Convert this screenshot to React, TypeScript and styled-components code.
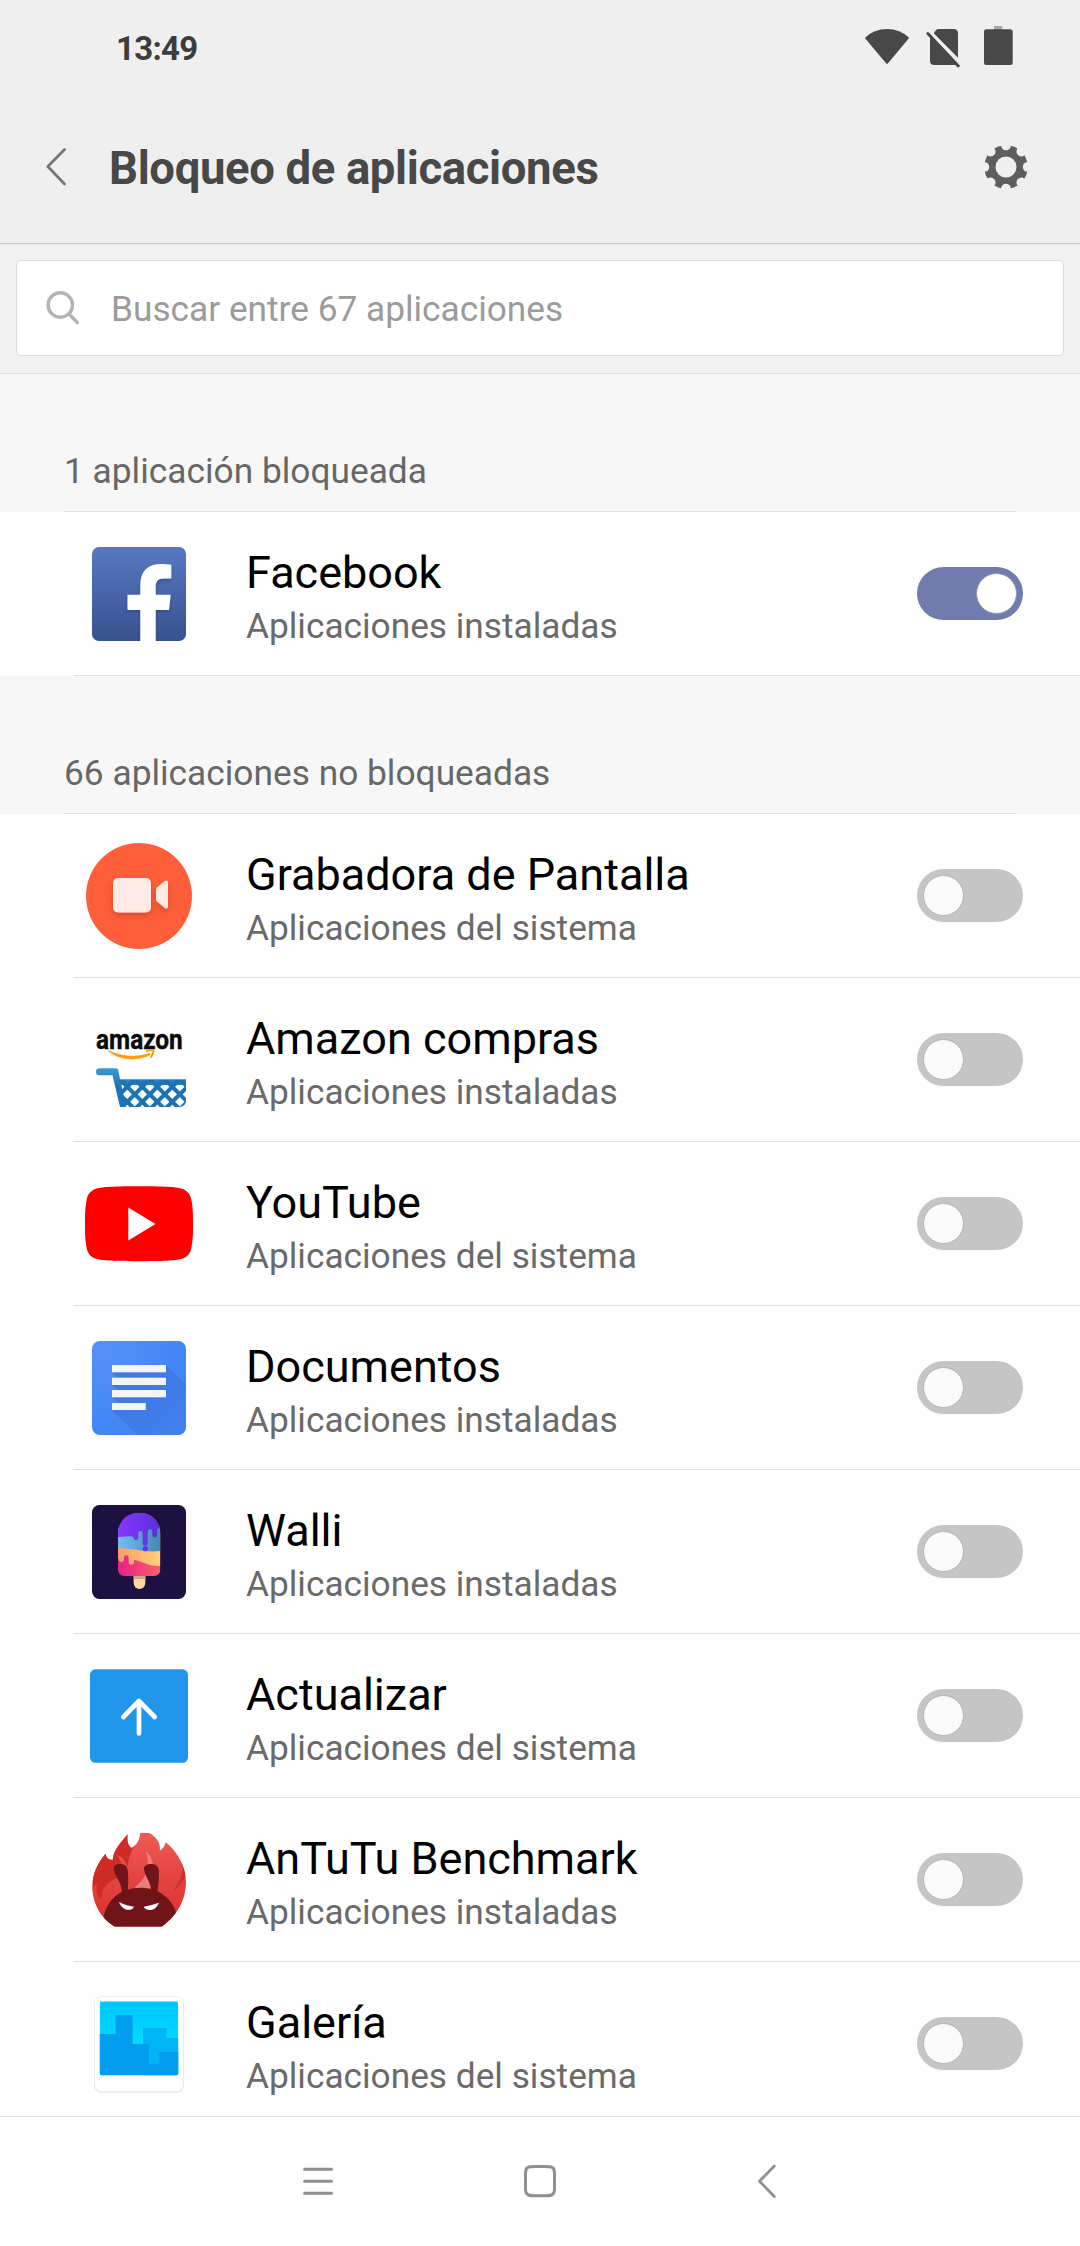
import React from 'react';
import styled, { createGlobalStyle } from 'styled-components';

const GlobalStyle = createGlobalStyle`
  * { box-sizing: border-box; }
  body { margin: 0; background: #fefefe; }
  svg { display: block; flex: none; }
`;

const Screen = styled.div`
  display: flex;
  flex-direction: column;
  width: 1080px;
  height: 2246px;
  overflow: hidden;
  background: #fefefe;
  font-family: Roboto, 'Noto Sans', sans-serif;
`;

const StatusBar = styled.div`
  flex: none;
  display: flex;
  align-items: center;
  justify-content: space-between;
  height: 98px;
  padding: 0 57px 0 116px;
  background: #efefef;
`;

const Clock = styled.span`
  font-size: 33px;
  font-weight: 700;
  line-height: 40px;
  letter-spacing: -0.7px;
  color: #3c3c3c;
`;

const StatusIcons = styled.div`
  display: flex;
  gap: 8px;
`;

const TitleBar = styled.header`
  flex: none;
  display: flex;
  align-items: center;
  height: 146px;
  padding: 0 49px 5px 31px;
  background: #efefef;
  border-bottom: 1px solid #c8c8c8;
`;

const Title = styled.h1`
  flex: 1;
  margin: 0 0 0 30px;
  padding-top: 1px;
  font-size: 45.5px;
  font-weight: 700;
  line-height: 56px;
  letter-spacing: -0.37px;
  color: #484848;
`;

const IconButton = styled.button`
  padding: 0;
  border: 0;
  background: none;
`;

const SearchBand = styled.div`
  flex: none;
  height: 130px;
  padding: 16px 16px 0;
  background: #f2f2f2;
  border-bottom: 1px solid #dfdfdf;
`;

const SearchBox = styled.div`
  display: flex;
  align-items: center;
  gap: 23px;
  height: 96px;
  padding-left: 23px;
  background: #fff;
  border: 1px solid #dadada;
  border-radius: 4px;
`;

const Placeholder = styled.span`
  padding-top: 2px;
  font-size: 35.25px;
  line-height: 42px;
  color: #9b9b9b;
`;

const List = styled.main`
  flex: 1;
  min-height: 0;
  overflow: hidden;
`;

const SectionHeader = styled.div`
  height: 138px;
  padding: 0 64px;
  background: #f7f7f7;
`;

const SectionLabel = styled.h2`
  display: flex;
  align-items: flex-end;
  height: 138px;
  margin: 0;
  padding-bottom: 20px;
  border-bottom: 1px solid #dfdfdf;
  font-size: 35.3px;
  font-weight: 400;
  line-height: 40px;
  color: #676767;
`;

const Row = styled.div`
  display: flex;
  align-items: center;
  height: 164px;
  margin-left: 73px;
  padding: 0 57px 0 11px;
  border-bottom: 1px solid #dfdfdf;
`;

const Texts = styled.div`
  flex: 1;
  margin-left: 52px;
  padding-top: 9px;
`;

const AppName = styled.div`
  font-size: 45px;
  line-height: 54px;
  color: #000;
`;

const AppKind = styled.div`
  padding-top: 1px;
  font-size: 35.25px;
  line-height: 50px;
  color: #6a6a6a;
`;

const Toggle = styled.span<{ $on?: boolean }>`
  display: flex;
  align-items: center;
  justify-content: ${(p) => (p.$on ? 'flex-end' : 'flex-start')};
  width: 106px;
  height: 53px;
  padding: 0 6px;
  border-radius: 27px;
  background: ${(p) => (p.$on ? '#6f7cad' : '#c5c5c5')};
`;

const Knob = styled.span<{ $on?: boolean }>`
  width: 41px;
  height: 41px;
  border-radius: 50%;
  border: 1px solid ${(p) => (p.$on ? '#8f96ad' : '#b4b4b4')};
  background: ${(p) => (p.$on ? '#fff' : '#fafafa')};
`;

const NavBar = styled.nav`
  flex: none;
  display: grid;
  grid-template-columns: repeat(3, 222px);
  justify-content: center;
  justify-items: center;
  align-items: center;
  height: 130px;
  border-top: 1px solid #e2e2e2;
  background: #fefefe;
`;

const FacebookIcon = () => (
  <svg width="110" height="110" viewBox="0 0 110 110">
    <defs>
      <linearGradient id="fb" x1="0" y1="0" x2="0" y2="1">
        <stop offset="0" stopColor="#5878c2" />
        <stop offset="1" stopColor="#38528f" />
      </linearGradient>
      <filter id="fbs" x="-20%" y="-20%" width="140%" height="140%">
        <feDropShadow dx="0" dy="2" stdDeviation="1.5" floodColor="#1d3468" floodOpacity=".5" />
      </filter>
      <clipPath id="fbc"><rect x="8" y="8" width="94" height="94" rx="7" /></clipPath>
    </defs>
    <rect x="8" y="8" width="94" height="94" rx="7" fill="url(#fb)" />
    <g clipPath="url(#fbc)">
      <path filter="url(#fbs)" fill="#fff" d="M56.3 104V71H43.5V55.7h12.8V46C56.3 32 64 25 77 25c4 0 8 .3 10.3.7v13.7H80c-6.500 0-8.300 3.200-8.300 8.200v8.100h15L85 71H71.700V104Z" />
    </g>
  </svg>
);

const RecorderIcon = () => (
  <svg width="110" height="110" viewBox="0 0 110 110">
    <defs>
      <filter id="recs" x="-30%" y="-30%" width="160%" height="170%">
        <feDropShadow dx="0" dy="3" stdDeviation="3" floodColor="#b8300c" floodOpacity=".5" />
      </filter>
    </defs>
    <circle cx="55" cy="55" r="53" fill="#fe5f3a" />
    <g fill="#ffeae5" filter="url(#recs)">
      <rect x="29" y="37" width="38" height="34.500" rx="5" />
      <path d="M72 49q0-1.500 1-2.500l7.800-6.500q3.200-1.500 3.200 1.500v24q0 3-3.200 1.500L73 60.500q-1-1-1-2.500Z" />
    </g>
  </svg>
);

const AmazonIcon = () => (
  <svg width="110" height="110" viewBox="0 0 110 110">
    <defs>
      <clipPath id="basket"><path d="M35 75h67v20q0 7-7 7H41Z" /></clipPath>
      <linearGradient id="cart" x1="0" y1="0" x2="0" y2="1">
        <stop offset="0" stopColor="#3b9ad6" />
        <stop offset=".5" stopColor="#1b73b4" />
      </linearGradient>
    </defs>
    <text x="0" y="0" transform="translate(12 44.300) scale(.87 1)" fontFamily="Roboto, sans-serif" fontWeight="700" fontSize="28" fill="#0a0a0a" stroke="#0a0a0a" strokeWidth=".4">amazon</text>
    <path d="M24.300 45.600C34 54.500 52 57 66.300 49.600L65.500 48.300C52 53.500 36 51.500 24.300 45.600Z" fill="#ff9a0c" stroke="#ff9a0c" strokeWidth=".8" strokeLinejoin="round" />
    <path d="M62 46.200q4.500-1.800 7.400-.7.300 3-2.600 7" fill="none" stroke="#ff9a0c" strokeWidth="1.900" strokeLinejoin="round" />
    <path d="M15.500 63.300H32q1.800 0 2.300 1.800L36 74.300H102V80H37.300L42 102H36L28.500 70.300H15.500a3.500 3.500 0 0 1 0-7Z" fill="url(#cart)" />
    <g clipPath="url(#basket)" stroke="#1b73b4" strokeWidth="4">
      {[-3, -2, -1, 0, 1, 2, 3, 4].map((k) => (
        <React.Fragment key={k}>
          <path d={`M${20.8 + 15 * k} 59.300l60 60`} />
          <path d={`M${80.8 + 15 * k} 59.300l-60 60`} />
        </React.Fragment>
      ))}
    </g>
  </svg>
);

const YouTubeIcon = () => (
  <svg width="110" height="110" viewBox="0 0 110 110">
    <path fill="#f00" d="M55 17.300C85 17.300 93 18.300 98 19.800C104 21.800 106.500 26 107.500 31.500C109 40 109 45 109 54.700C109 65 109 70 107.500 78.300C106.500 84 104 87.800 98 89.800C93 91.300 85 92.200 55 92.200C25 92.200 17 91.300 12 89.800C6 87.800 3.500 84 2.500 78.300C1 70 1 65 1 54.700C1 45 1 40 2.500 31.500C3.500 26 6 21.800 12 19.800C17 18.300 25 17.300 55 17.300Z" />
    <path fill="#fff" d="M44.300 38.500L71.500 55L44.300 71.500Z" />
  </svg>
);

const DocsIcon = () => (
  <svg width="110" height="110" viewBox="0 0 110 110">
    <defs>
      <radialGradient id="doc" cx=".12" cy=".12" r="1">
        <stop offset="0" stopColor="#5592f8" />
        <stop offset=".8" stopColor="#4285f4" />
      </radialGradient>
      <linearGradient id="docs" x1="0" y1="0" x2="1" y2="1">
        <stop offset="0" stopColor="#3a6bd0" stopOpacity=".7" />
        <stop offset="1" stopColor="#4080ee" stopOpacity=".7" />
      </linearGradient>
      <clipPath id="docc"><rect x="8" y="8" width="94" height="94" rx="8" /></clipPath>
    </defs>
    <g clipPath="url(#docc)">
      <rect x="8" y="8" width="94" height="94" fill="url(#doc)" />
      <path fill="url(#docs)" d="M82 32L102 52V102H53L28 77H61.700V70H34.500L28 64H82V57H33.500L28 52H82V44.700H33.500L28 39.500H82Z" />
    </g>
    <g fill="#f4f4f4">
      <rect x="28" y="32" width="54" height="7.300" />
      <rect x="28" y="44.700" width="54" height="7.300" />
      <rect x="28" y="57" width="54" height="7.300" />
      <rect x="28" y="70" width="33.700" height="7" />
    </g>
  </svg>
);

const WalliIcon = () => (
  <svg width="110" height="110" viewBox="0 0 110 110">
    <defs>
      <linearGradient id="wp"><stop offset="0" stopColor="#8a37ff" /><stop offset="1" stopColor="#5530d8" /></linearGradient>
      <linearGradient id="wb"><stop offset="0" stopColor="#76bdf5" /><stop offset="1" stopColor="#4489ae" /></linearGradient>
      <linearGradient id="wo"><stop offset="0" stopColor="#ff9b6b" /><stop offset="1" stopColor="#ffd27a" /></linearGradient>
      <linearGradient id="wr"><stop offset="0" stopColor="#e6208b" /><stop offset="1" stopColor="#ff6066" /></linearGradient>
      <clipPath id="pop"><path d="M174 162C174 124 202 98 238 98S301 124 301 162V268Q301 288 281 288H194Q174 288 174 268Z" /></clipPath>
    </defs>
    <rect x="8" y="8" width="94" height="94" rx="7.500" fill="#1c1140" />
    <g transform="translate(-24 -17) scale(.33333)">
      <path d="M221 285H256V309a17.500 18 0 0 1-35 0Z" fill="#fdd6a0" />
      <path d="M221 286H256V297H221Z" fill="#cda685" />
      <g clipPath="url(#pop)">
        <rect x="172" y="95" width="132" height="195" fill="url(#wr)" />
        <path d="M172 150H304V258C262 260 246 242 222 240V246a8 8 0 0 1-16 0V233a7 7 0 0 0-14 0V238a8 8 0 0 1-16 0L172 230Z" fill="url(#wo)" />
        <path d="M172 140H304V212C262 220 225 205 172 204Z" fill="url(#wb)" />
        <path d="M172 95H304V148Q294 140 291 151V166a7 7 0 0 1-14 0V155a7 7 0 0 0-14 0V190a7.500 7 0 0 1-15 0V160a6.500 7 0 0 0-13 0V173a7.500 7 0 0 1-15 0Q220 165 172 172Z" fill="url(#wp)" />
        <circle cx="256" cy="206" r="8" fill="#6534e8" />
      </g>
    </g>
  </svg>
);

const UpdateIcon = () => (
  <svg width="110" height="110" viewBox="0 0 110 110">
    <rect x="6" y="8.300" width="98" height="93.500" rx="5.500" fill="#2096ea" />
    <path d="M55 72.500V40M39.300 56L55 40L70.700 56" fill="none" stroke="#fff" strokeWidth="4.700" strokeLinecap="round" strokeLinejoin="round" />
  </svg>
);

const AntutuIcon = () => (
  <svg width="110" height="110" viewBox="0 0 110 110">
    <defs>
      <linearGradient id="an" x1="0" y1="0" x2="0" y2="1">
        <stop offset="0" stopColor="#ef5a55" />
        <stop offset="1" stopColor="#d82e2a" />
      </linearGradient>
      <clipPath id="anc">
        <path d="M97 230C97 190 115 155 137 131Q138 149 158 150C160 120 185 95 203 73C200 92 204 108 215 114C230 105 240 90 240 69H268C288 80 304 100 299 123Q313 114 317 97C350 122 378 170 378 215C378 260 360 310 305 350H165C115 320 97 270 97 230Z" />
      </clipPath>
    </defs>
    <g transform="translate(-24 -15) scale(.33333)">
      <g clipPath="url(#anc)">
        <rect x="95" y="65" width="290" height="290" fill="url(#an)" />
        <path d="M90 60H240C240 90 205 120 203 172C196 150 185 138 168 135C180 145 184 155 184 168V200C150 210 120 230 124 270C112 258 104 240 113 218C102 225 98 240 97 255H90Z" fill="#ce2b24" />
        <path d="M357 142C385 190 352 215 339 246C350 235 375 215 378 190L384 150Z" fill="#cd2f2a" />
        <path d="M257 124C286 145 286 200 270 238H220C240 215 258 205 262 170C266 150 260 135 257 124Z" fill="#ef7b76" />
        <path d="M128 330C140 265 185 233 240 233S340 265 352 320L320 360H150Z" fill="#711419" />
        <path d="M186 252C187 215 162 198 161 175C163 158 198 158 202 176C207 203 204 225 203 250Z" fill="#711419" />
        <path d="M275 250C273 212 252 198 252 174C255 158 290 158 295 175C300 205 294 225 292 252Z" fill="#711419" />
      </g>
      <path d="M177 276C195 285 208 288 222 290C218 303 188 306 177 276Z" fill="#fff" />
      <path d="M297 278C280 284 265 288 251 290C258 304 286 306 297 278Z" fill="#fff" />
    </g>
  </svg>
);

const GalleryIcon = () => (
  <svg width="110" height="110" viewBox="0 0 110 110">
    <defs>
      <linearGradient id="sky" x1="0" y1="0" x2="0" y2="1">
        <stop offset="0" stopColor="#00c6ff" />
        <stop offset=".6" stopColor="#00dcff" />
      </linearGradient>
      <clipPath id="galc"><rect x="119" y="94" width="236" height="222" rx="7" /></clipPath>
    </defs>
    <g transform="translate(-24 -19) scale(.33333)">
      <rect x="102" y="80" width="270" height="288" rx="22" fill="#e4e4e4" />
      <rect x="103.500" y="79" width="267" height="286" rx="22" fill="#fff" stroke="#e9e9e9" strokeWidth="2" />
      <g clipPath="url(#galc)">
        <rect x="119" y="94" width="236" height="222" fill="url(#sky)" />
        <path d="M249 174H319V204H356V318H249Z" fill="#00b4f6" />
        <path d="M118 192H167V135H218V222H267V281H298V246H356V318H118Z" fill="#029def" />
      </g>
    </g>
  </svg>
);

const WifiIcon = () => (
  <svg width="48" height="50" viewBox="0 0 48 50">
    <path fill="#484848" d="M2.300 13.500Q11 5 24 5T45.700 13.500Q46 14 45.500 14.700L25 39.300Q24 40.300 23 39.300L2.500 14.700Q2 14 2.300 13.500Z" />
  </svg>
);

const NoSimIcon = () => (
  <svg width="48" height="50" viewBox="0 0 48 50">
    <path fill="#484848" d="M15.200 8.400L17.200 6.100Q18.200 5 19.800 5H34.500Q39 5 39 9.500V33.800L15.200 9.800Q14.500 9.100 15.200 8.400Z" />
    <path fill="#484848" d="M11 13.200L37.800 40Q36.500 41 34.500 41H15.500Q11 41 11 36.500Z" />
    <path d="M8.800 9.500L39.300 42" stroke="#484848" strokeWidth="3" strokeLinecap="round" />
  </svg>
);

const BatteryIcon = () => (
  <svg width="48" height="50" viewBox="0 0 48 50">
    <rect x="19" y="2" width="8.300" height="4" fill="#a6a6a6" />
    <rect x="9" y="5.200" width="28.700" height="35.800" rx="2.500" fill="#484848" />
  </svg>
);

const BackIcon = () => (
  <svg width="48" height="50" viewBox="0 0 48 50">
    <path d="M33.500 6.500L16.800 23.500L33.500 41" fill="none" stroke="#777" strokeWidth="2.800" strokeLinecap="round" strokeLinejoin="round" />
  </svg>
);

const GearIcon = () => (
  <svg width="50" height="50" viewBox="0 0 50 50">
    <mask id="gear">
      <rect width="50" height="50" fill="#fff" />
      <circle cx="25" cy="24" r="10.500" fill="#000" />
      {[0, 45, 90, 135, 180, 225, 270, 315].map((a) => (
        <ellipse key={a} cx="25" cy="2.700" rx="4.800" ry="4.500" fill="#000" transform={`rotate(${a} 25 24)`} />
      ))}
    </mask>
    <circle cx="25" cy="24" r="21.800" fill="#5e5e5e" mask="url(#gear)" />
  </svg>
);

const SearchIcon = () => (
  <svg width="48" height="48" viewBox="0 0 48 48">
    <g fill="none" stroke="#b3b3b3" strokeWidth="3.500" strokeLinecap="round">
      <circle cx="20.300" cy="21" r="12.200" />
      <path d="M29 30L37.300 38.600" />
    </g>
  </svg>
);

const apps = [
  { name: 'Grabadora de Pantalla', kind: 'Aplicaciones del sistema', Icon: RecorderIcon },
  { name: 'Amazon compras', kind: 'Aplicaciones instaladas', Icon: AmazonIcon },
  { name: 'YouTube', kind: 'Aplicaciones del sistema', Icon: YouTubeIcon },
  { name: 'Documentos', kind: 'Aplicaciones instaladas', Icon: DocsIcon },
  { name: 'Walli', kind: 'Aplicaciones instaladas', Icon: WalliIcon },
  { name: 'Actualizar', kind: 'Aplicaciones del sistema', Icon: UpdateIcon },
  { name: 'AnTuTu Benchmark', kind: 'Aplicaciones instaladas', Icon: AntutuIcon },
  { name: 'Galería', kind: 'Aplicaciones del sistema', Icon: GalleryIcon },
];

type AppRowProps = { name: string; kind: string; Icon: React.ComponentType; on?: boolean };

const AppRow = ({ name, kind, Icon, on }: AppRowProps) => (
  <Row>
    <Icon />
    <Texts>
      <AppName>{name}</AppName>
      <AppKind>{kind}</AppKind>
    </Texts>
    <Toggle $on={on} role="switch" aria-checked={!!on}>
      <Knob $on={on} />
    </Toggle>
  </Row>
);

export default function App() {
  return (
    <Screen>
      <GlobalStyle />
      <StatusBar>
        <Clock>13:49</Clock>
        <StatusIcons>
          <WifiIcon />
          <NoSimIcon />
          <BatteryIcon />
        </StatusIcons>
      </StatusBar>
      <TitleBar>
        <IconButton><BackIcon /></IconButton>
        <Title>Bloqueo de aplicaciones</Title>
        <IconButton><GearIcon /></IconButton>
      </TitleBar>
      <SearchBand>
        <SearchBox>
          <SearchIcon />
          <Placeholder>Buscar entre 67 aplicaciones</Placeholder>
        </SearchBox>
      </SearchBand>
      <List>
        <SectionHeader>
          <SectionLabel>1 aplicación bloqueada</SectionLabel>
        </SectionHeader>
        <AppRow name="Facebook" kind="Aplicaciones instaladas" Icon={FacebookIcon} on />
        <SectionHeader>
          <SectionLabel>66 aplicaciones no bloqueadas</SectionLabel>
        </SectionHeader>
        {apps.map((app) => (
          <AppRow key={app.name} {...app} />
        ))}
      </List>
      <NavBar>
        <svg width="50" height="50" viewBox="0 0 50 50">
          <path d="M11.600 12.200H38.500M11.600 24.200H38.500M11.600 36.200H38.500" stroke="#909090" strokeWidth="3" strokeLinecap="round" />
        </svg>
        <svg width="50" height="50" viewBox="0 0 50 50">
          <path d="M25 9.500C35 9.500 39.500 8.500 39.500 16V32C39.500 39.500 35 38.800 25 38.800S10.500 39.500 10.500 32V16C10.500 8.500 15 9.500 25 9.500Z" fill="none" stroke="#909090" strokeWidth="3" />
        </svg>
        <svg width="50" height="50" viewBox="0 0 50 50">
          <path d="M37.300 9L22.500 24.200L37.300 39.500" fill="none" stroke="#909090" strokeWidth="2.800" strokeLinecap="round" strokeLinejoin="round" />
        </svg>
      </NavBar>
    </Screen>
  );
}
